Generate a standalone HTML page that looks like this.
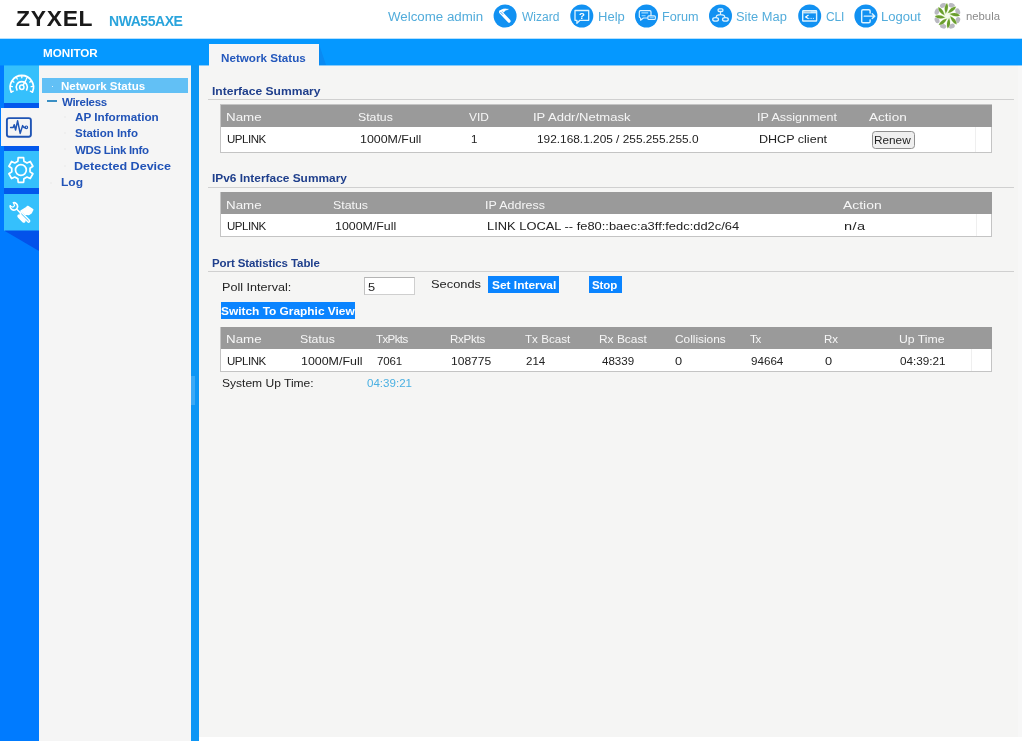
<!DOCTYPE html>
<html lang="en">
<head>
<meta charset="utf-8">
<title>ZYXEL NWA55AXE - Network Status</title>
<style>
html,body{margin:0;padding:0;}
body{width:1024px;height:741px;overflow:hidden;background:#fff;font-family:"Liberation Sans",sans-serif;}
#page{position:relative;width:1024px;height:741px;overflow:hidden;background:#fff;}
.t{position:absolute;white-space:pre;line-height:1;transform-origin:0 0;will-change:transform;font-family:"Liberation Sans",sans-serif;}
.b{position:absolute;}
svg{position:absolute;overflow:visible;}
#bar{left:0;top:39px;width:1022px;height:26px;background:#0598ff;}
#left{left:0;top:65px;width:39px;height:676px;background:#007bff;}
#tilebg{left:4px;top:65px;width:35px;height:166px;background:#0358ec;}
.tile{left:4px;width:35px;background:#35c0fc;}
#menu{left:39px;top:65px;width:152px;height:676px;background:#f5f5f5;}
#sel{left:42px;top:78px;width:146px;height:14.5px;background:#62c0f5;}
#split{left:191px;top:65px;width:8px;height:676px;background:#0d96f5;}
#main{left:199px;top:65px;width:823px;height:672px;background:#f5f5f4;}
#tab{left:209px;top:44px;width:110px;height:22px;background:#f5f5f5;}
.hr{left:208px;width:806px;height:1px;background:#d0d0d0;}
.tbl{left:220px;width:772px;border:1px solid #c4c4c4;box-sizing:border-box;background:#fff;}
.th{left:221px;width:771px;background:#9a9a9a;}
.btn{background:#0a84ff;}
</style>
</head>
<body>
<div id="page">

<header id="hdr">
<span class="t" id="t0" style="left:15.69px;top:7.84px;font-size:22px;color:#1a1a1a;font-weight:700;letter-spacing:0.683px;transform:scaleX(1.0400);">ZYXEL</span>
<span class="t" id="t1" style="left:109.39px;top:13.91px;font-size:14px;color:#2aa4dc;font-weight:700;letter-spacing:-0.449px;">NWA55AXE</span>
<span class="t" id="t2" style="left:387.79px;top:11.34px;font-size:12px;color:#52acdb;transform:scaleX(1.1094);">Welcome admin</span>
<span class="t" id="t3" style="left:522.29px;top:11.34px;font-size:12px;color:#52acdb;transform:scaleX(1.0024);">Wizard</span>
<span class="t" id="t4" style="left:597.53px;top:11.34px;font-size:12px;color:#52acdb;transform:scaleX(1.0851);">Help</span>
<span class="t" id="t5" style="left:662.31px;top:11.34px;font-size:12px;color:#52acdb;transform:scaleX(1.0538);">Forum</span>
<span class="t" id="t6" style="left:735.78px;top:11.34px;font-size:12px;color:#52acdb;transform:scaleX(1.0725);">Site Map</span>
<span class="t" id="t7" style="left:825.69px;top:11.34px;font-size:12px;color:#52acdb;letter-spacing:-0.172px;">CLI</span>
<span class="t" id="t8" style="left:881.25px;top:11.34px;font-size:12px;color:#52acdb;transform:scaleX(1.0892);">Logout</span>
<span class="t" id="t9" style="left:965.82px;top:10.61px;font-size:11px;color:#8a8a8a;transform:scaleX(1.0277);">nebula</span>
<svg class="b" style="left:0;top:0" width="1024" height="38" viewBox="0 0 1024 38" fill="none" stroke-linecap="round" stroke-linejoin="round">
<circle cx="505.1" cy="16" r="11.5" fill="#1191f2"/>
<circle cx="581.8" cy="16" r="11.5" fill="#1191f2"/>
<circle cx="646.5" cy="16" r="11.5" fill="#1191f2"/>
<circle cx="720.5" cy="16" r="11.5" fill="#1191f2"/>
<circle cx="809.7" cy="16" r="11.5" fill="#1191f2"/>
<circle cx="865.9" cy="16" r="11.5" fill="#1191f2"/>
<path d="M500.6 12.2 L509.1 21.1" stroke="#ffffff" stroke-width="3.2"/>
<path d="M500.7 12.3 L502.7 14.4" stroke="#1191f2" stroke-width="0.8"/>
<path d="M499.4 11.0 Q503.6 7.6 508.4 9.3 Q505.2 9.9 503.6 12.2 L502.2 10.9 Z" fill="#ffffff" stroke="#ffffff" stroke-width="0.5"/>
<path d="M575.0 10.5 H588.7 V20.3 H579.9 L576.9 23.2 V20.3 H575.0 Z" stroke="#dff4ff" stroke-width="1.3"/>
<text x="581.9" y="18.9" font-family="Liberation Sans, sans-serif" font-size="9.6" font-weight="700" fill="#ffffff" stroke="none" text-anchor="middle">?</text>
<path d="M640.6 10.7 H649.8 Q651.0 10.7 651.0 11.9 V16.8 Q651.0 18.0 649.8 18.0 H643.4 L640.6 20.2 V18.0 H640.5 Q639.3 18.0 639.3 16.8 V11.9 Q639.3 10.7 640.5 10.7 Z" stroke="#dff4ff" stroke-width="1.2"/>
<path d="M641.4 12.9 H648.2 M641.6 15.7 H645.6" stroke="#9fdcff" stroke-width="1.1" stroke-linecap="butt"/>
<rect x="647.9" y="15.9" width="7.4" height="3.6" rx="0.9" fill="#1191f2" stroke="#dff4ff" stroke-width="1.2"/>
<path d="M649.6 17.8 H653.8" stroke="#9fdcff" stroke-width="1" stroke-linecap="butt"/>
<rect x="718.1" y="8.8" width="4.8" height="2.7" rx="1.0" stroke="#dff4ff" stroke-width="1.3"/>
<path d="M720.5 12.2 V14.4 M716.2 17.0 Q716.4 14.7 720.5 14.7 Q724.6 14.7 724.8 17.0" stroke="#dff4ff" stroke-width="1.2"/>
<ellipse cx="715.6" cy="19.4" rx="2.9" ry="1.7" stroke="#dff4ff" stroke-width="1.3"/>
<ellipse cx="725.4" cy="19.4" rx="2.9" ry="1.7" stroke="#dff4ff" stroke-width="1.3"/>
<rect x="802.7" y="10.8" width="13.9" height="10.2" rx="0.6" stroke="#dff4ff" stroke-width="1.4"/>
<rect x="803.2" y="11.3" width="12.9" height="2.1" fill="#cfeeff" stroke="none"/>
<path d="M804.4 11.9 H810.6" stroke="#9fb6c6" stroke-width="0.9" stroke-linecap="butt"/>
<path d="M808.2 15.3 L805.6 16.9 L808.2 18.5" stroke="#ffffff" stroke-width="1.2"/>
<path d="M809.6 18.4 H814.0" stroke="#dff4ff" stroke-width="1.0" stroke-dasharray="0.9 0.8" stroke-linecap="butt"/>
<path d="M870.1 13.0 V11.0 Q870.1 9.7 868.8 9.7 H863.0 Q861.7 9.7 861.7 11.0 V21.5 Q861.7 22.8 863.0 22.8 H868.8 Q870.1 22.8 870.1 21.5 V20.0" stroke="#dff4ff" stroke-width="1.45"/>
<path d="M864.2 16.2 H874.4 M872.2 13.8 L874.8 16.2 L872.2 18.6" stroke="#dff4ff" stroke-width="1.3"/>
<ellipse cx="951.69" cy="5.45" rx="3.2" ry="2.3" transform="rotate(22.5 951.69 5.45)" fill="#b9b9c0"/>
<ellipse cx="957.75" cy="11.51" rx="3.2" ry="2.3" transform="rotate(67.5 957.75 11.51)" fill="#b9b9c0"/>
<ellipse cx="957.75" cy="20.09" rx="3.2" ry="2.3" transform="rotate(112.5 957.75 20.09)" fill="#b9b9c0"/>
<ellipse cx="951.69" cy="26.15" rx="3.2" ry="2.3" transform="rotate(157.5 951.69 26.15)" fill="#b9b9c0"/>
<ellipse cx="943.11" cy="26.15" rx="3.2" ry="2.3" transform="rotate(202.5 943.11 26.15)" fill="#b9b9c0"/>
<ellipse cx="937.05" cy="20.09" rx="3.2" ry="2.3" transform="rotate(247.5 937.05 20.09)" fill="#b9b9c0"/>
<ellipse cx="937.05" cy="11.51" rx="3.2" ry="2.3" transform="rotate(292.5 937.05 11.51)" fill="#b9b9c0"/>
<ellipse cx="943.11" cy="5.45" rx="3.2" ry="2.3" transform="rotate(337.5 943.11 5.45)" fill="#b9b9c0"/>
<circle cx="947.4" cy="15.8" r="4.5" fill="#f4faec"/>
<path d="M-1.7 -2.4 Q-4.2 -8.6 -0.4 -12.5 Q2.0 -7.8 -1.7 -2.4 Z" transform="translate(947.4 15.8) rotate(0)" fill="#6a9e2e" stroke="#d9eebf" stroke-width="0.8" paint-order="stroke"/>
<path d="M-1.7 -2.4 Q-4.2 -8.6 -0.4 -12.5 Q2.0 -7.8 -1.7 -2.4 Z" transform="translate(947.4 15.8) rotate(45)" fill="#6a9e2e" stroke="#d9eebf" stroke-width="0.8" paint-order="stroke"/>
<path d="M-1.7 -2.4 Q-4.2 -8.6 -0.4 -12.5 Q2.0 -7.8 -1.7 -2.4 Z" transform="translate(947.4 15.8) rotate(90)" fill="#6a9e2e" stroke="#d9eebf" stroke-width="0.8" paint-order="stroke"/>
<path d="M-1.7 -2.4 Q-4.2 -8.6 -0.4 -12.5 Q2.0 -7.8 -1.7 -2.4 Z" transform="translate(947.4 15.8) rotate(135)" fill="#6a9e2e" stroke="#d9eebf" stroke-width="0.8" paint-order="stroke"/>
<path d="M-1.7 -2.4 Q-4.2 -8.6 -0.4 -12.5 Q2.0 -7.8 -1.7 -2.4 Z" transform="translate(947.4 15.8) rotate(180)" fill="#6a9e2e" stroke="#d9eebf" stroke-width="0.8" paint-order="stroke"/>
<path d="M-1.7 -2.4 Q-4.2 -8.6 -0.4 -12.5 Q2.0 -7.8 -1.7 -2.4 Z" transform="translate(947.4 15.8) rotate(225)" fill="#6a9e2e" stroke="#d9eebf" stroke-width="0.8" paint-order="stroke"/>
<path d="M-1.7 -2.4 Q-4.2 -8.6 -0.4 -12.5 Q2.0 -7.8 -1.7 -2.4 Z" transform="translate(947.4 15.8) rotate(270)" fill="#6a9e2e" stroke="#d9eebf" stroke-width="0.8" paint-order="stroke"/>
<path d="M-1.7 -2.4 Q-4.2 -8.6 -0.4 -12.5 Q2.0 -7.8 -1.7 -2.4 Z" transform="translate(947.4 15.8) rotate(315)" fill="#6a9e2e" stroke="#d9eebf" stroke-width="0.8" paint-order="stroke"/>
</svg>
</header>

<div id="bar" class="b"></div>
<div class="b" style="left:0;top:38px;width:1022px;height:1px;background:#0598ff;opacity:.3;"></div>
<div id="barlabel">
<span class="t" id="t10" style="left:43.34px;top:47.71px;font-size:11.5px;color:#ffffff;font-weight:700;transform:scaleX(1.0128);">MONITOR</span>
</div>

<nav id="side">
<div id="left" class="b"></div>
<div id="tilebg" class="b"></div>
<div class="b tile" style="top:65px;height:38px;"></div>
<div class="b tile" style="left:1px;width:38px;top:108px;height:37.5px;background:#f5f5f5;"></div>
<div class="b tile" style="top:151px;height:37px;"></div>
<div class="b tile" style="top:194px;height:36.5px;"></div>
<svg class="b" style="left:0;top:226px" width="40" height="30" viewBox="0 226 40 30"><polygon points="4,230.6 39,230.6 39,251" fill="#0352ea"/></svg>
<svg class="b" style="left:0;top:65px" width="40" height="170" viewBox="0 65 40 170" fill="none" stroke-linecap="round" stroke-linejoin="round">
<path d="M11.20 92.14 A11.7 11.7 0 1 1 32.40 92.14" stroke="#ffffff" stroke-width="1.8"/>
<path d="M11.74 91.89 L13.28 91.17" stroke="#ffffff" stroke-width="1.3"/>
<path d="M10.72 86.47 L12.42 86.59" stroke="#ffffff" stroke-width="1.3"/>
<path d="M12.44 81.24 L13.87 82.15" stroke="#ffffff" stroke-width="1.3"/>
<path d="M16.46 77.47 L17.28 78.96" stroke="#ffffff" stroke-width="1.3"/>
<path d="M21.80 76.10 L21.80 77.80" stroke="#ffffff" stroke-width="1.3"/>
<path d="M27.14 77.47 L26.32 78.96" stroke="#ffffff" stroke-width="1.3"/>
<path d="M31.16 81.24 L29.73 82.15" stroke="#ffffff" stroke-width="1.3"/>
<path d="M32.88 86.47 L31.18 86.59" stroke="#ffffff" stroke-width="1.3"/>
<path d="M31.86 91.89 L30.32 91.17" stroke="#ffffff" stroke-width="1.3"/>
<path d="M16.95 90.00 A5.6 5.6 0 1 1 26.65 90.00" stroke="#ffffff" stroke-width="1.6"/>
<circle cx="21.8" cy="87.2" r="2.2" stroke="#ffffff" stroke-width="1.5"/>
<path d="M23.0 85.4 L26.0 80.0" stroke="#ffffff" stroke-width="1.5"/>
<rect x="6.9" y="118.1" width="24" height="18.6" rx="2.2" stroke="#1f54b4" stroke-width="1.9"/>
<path d="M10.6 127.4 H13.2 L14.2 124.8 L15.6 130 L17.6 120.8 L20.2 133.4 L22.6 125.6 L23.8 127.4 H25.2" stroke="#1f54b4" stroke-width="1.5"/>
<circle cx="26.3" cy="127.3" r="1.3" stroke="#1f54b4" stroke-width="1.2"/>
<polygon points="17.87,161.21 18.17,157.70 23.63,157.70 23.93,161.21 27.00,162.98 30.19,161.49 32.92,166.21 30.03,168.23 30.03,171.77 32.92,173.79 30.19,178.51 27.00,177.02 23.93,178.79 23.63,182.30 18.17,182.30 17.87,178.79 14.80,177.02 11.61,178.51 8.88,173.79 11.77,171.77 11.77,168.23 8.88,166.21 11.61,161.49 14.80,162.98" stroke="#ffffff" stroke-width="1.7" stroke-linejoin="round"/>
<circle cx="20.9" cy="170.0" r="5.4" stroke="#ffffff" stroke-width="1.7"/>
<path d="M13.45 202.73 A3.7 3.7 0 1 1 10.23 205.95" stroke="#ffffff" stroke-width="1.7"/>
<path d="M13.45 202.73 L14.6 205.6 L13.0 207.2 L10.23 205.95" stroke="#ffffff" stroke-width="1.2"/>
<path d="M16.8 209.2 L21.0 213.4" stroke="#ffffff" stroke-width="1.5"/>
<path d="M21.4 213.8 L28.6 221.0" stroke="#ffffff" stroke-width="3.6"/>
<path d="M21.6 214.0 L28.4 220.8" stroke="#35c0fc" stroke-width="1.0"/>
<path d="M20.8 211.2 L25.6 208.2 L27.8 206.4 L32.8 209.6 L31.2 213.0 L28.6 214.6 L25.6 214.4 L22.6 212.0 Z" fill="#ffffff" stroke="#ffffff" stroke-width="1.4"/>
<path d="M19.2 216.2 L23.8 220.8" stroke="#ffffff" stroke-width="3.8"/>
</svg>
</nav>

<nav id="menuwrap">
<div id="menu" class="b"></div>
<div id="sel" class="b"></div>
<div class="b" style="left:47px;top:100.3px;width:10px;height:1.6px;background:#3a8fc4;"></div>
<div class="b" style="left:51.8px;top:85.8px;width:1.4px;height:1.4px;background:#fff;opacity:.75;"></div>
<div class="b" style="left:64px;top:116px;width:2px;height:2px;background:#efefef;"></div>
<div class="b" style="left:64px;top:132px;width:2px;height:2px;background:#efefef;"></div>
<div class="b" style="left:64px;top:148px;width:2px;height:2px;background:#efefef;"></div>
<div class="b" style="left:64px;top:164.5px;width:2px;height:2px;background:#efefef;"></div>
<div class="b" style="left:49.5px;top:182px;width:2px;height:2px;background:#efefef;"></div>
<span class="t" id="t11" style="left:61.34px;top:81.21px;font-size:11.5px;color:#ffffff;font-weight:700;transform:scaleX(1.0049);">Network Status</span>
<span class="t" id="t12" style="left:61.64px;top:96.65px;font-size:11.5px;color:#2153b7;font-weight:700;letter-spacing:-0.293px;">Wireless</span>
<span class="t" id="t13" style="left:74.91px;top:111.75px;font-size:11.5px;color:#2153b7;font-weight:700;transform:scaleX(1.0185);">AP Information</span>
<span class="t" id="t14" style="left:74.50px;top:127.79px;font-size:11.5px;color:#2153b7;font-weight:700;letter-spacing:-0.028px;">Station Info</span>
<span class="t" id="t15" style="left:75.37px;top:144.65px;font-size:11.5px;color:#2153b7;font-weight:700;letter-spacing:-0.325px;">WDS Link Info</span>
<span class="t" id="t16" style="left:74.37px;top:160.89px;font-size:11.5px;color:#2153b7;font-weight:700;transform:scaleX(1.0928);">Detected Device</span>
<span class="t" id="t17" style="left:61.31px;top:177.47px;font-size:11.5px;color:#2153b7;font-weight:700;transform:scaleX(1.0463);">Log</span>
</nav>

<div id="split" class="b"></div>
<div class="b" style="left:191px;top:376px;width:4px;height:29px;background:#3aa9f7;"></div>

<main id="mainwrap">
<div id="main" class="b"></div>
<div class="b" style="left:1018px;top:65px;width:4px;height:672px;background:#f7f7f7;"></div>
<div class="b" style="left:0;top:65px;width:1022px;height:1px;background:#0598ff;opacity:.45;"></div>
<div id="tab" class="b"></div>
<svg class="b" style="left:319px;top:44px" width="8" height="21" viewBox="0 0 8 21"><polygon points="0,0 0,21 7,21" fill="#0a8af2"/></svg>
<span class="t" id="t18" style="left:221.48px;top:52.71px;font-size:11.5px;color:#2458bc;font-weight:700;transform:scaleX(1.0123);">Network Status</span>

<div class="b hr" style="top:99px;"></div>
<div class="b tbl" style="top:104px;height:48.5px;"></div>
<div class="b th" style="top:104.5px;height:22px;"></div>
<div class="b" style="left:974.5px;top:127px;width:1px;height:24.5px;background:#efefef;"></div>
<div class="b" style="left:872px;top:130.5px;width:42.5px;height:18px;box-sizing:border-box;border:1px solid #8f8f8f;border-radius:3.5px;background:#efefef;"></div>

<div class="b hr" style="top:186.5px;"></div>
<div class="b tbl" style="top:192px;height:45px;"></div>
<div class="b th" style="top:192.4px;height:21.5px;"></div>
<div class="b" style="left:975.5px;top:214px;width:1px;height:22px;background:#efefef;"></div>

<div class="b hr" style="top:271px;"></div>
<div class="b" style="left:364px;top:276.5px;width:51px;height:18px;box-sizing:border-box;border:1px solid #cfcfcf;border-top-color:#b4b4b4;border-left-color:#c0c0c0;background:#fff;"></div>
<div class="b btn" style="left:487.7px;top:276.3px;width:71.3px;height:17.2px;"></div>
<div class="b btn" style="left:588.6px;top:276.3px;width:33.3px;height:17.2px;"></div>
<div class="b btn" style="left:221px;top:302.4px;width:134px;height:17px;"></div>

<div class="b tbl" style="top:327px;height:44.5px;"></div>
<div class="b th" style="top:327.4px;height:21.4px;"></div>
<div class="b" style="left:971px;top:349px;width:1px;height:22px;background:#efefef;"></div>
<span class="t" id="t19" style="left:212.44px;top:86.19px;font-size:11.5px;color:#1f3f8c;font-weight:700;transform:scaleX(1.0475);">Interface Summary</span>
<span class="t" id="t20" style="left:212.05px;top:173.13px;font-size:11.5px;color:#1f3f8c;font-weight:700;transform:scaleX(1.0346);">IPv6 Interface Summary</span>
<span class="t" id="t21" style="left:212.09px;top:257.87px;font-size:11.5px;color:#1f3f8c;font-weight:700;letter-spacing:-0.094px;">Port Statistics Table</span>
<span class="t" id="t22" style="left:225.79px;top:111.71px;font-size:11.5px;color:#f6f6f6;transform:scaleX(1.1591);">Name</span>
<span class="t" id="t23" style="left:358.22px;top:111.71px;font-size:11.5px;color:#f6f6f6;transform:scaleX(1.0689);">Status</span>
<span class="t" id="t24" style="left:469.33px;top:111.71px;font-size:11.5px;color:#f6f6f6;transform:scaleX(1.0352);">VID</span>
<span class="t" id="t25" style="left:533.44px;top:111.71px;font-size:11.5px;color:#f6f6f6;transform:scaleX(1.1316);">IP Addr/Netmask</span>
<span class="t" id="t26" style="left:757.21px;top:111.71px;font-size:11.5px;color:#f6f6f6;transform:scaleX(1.0905);">IP Assignment</span>
<span class="t" id="t27" style="left:869.44px;top:111.71px;font-size:11.5px;color:#f6f6f6;transform:scaleX(1.1804);">Action</span>
<span class="t" id="t28" style="left:226.53px;top:133.87px;font-size:11.5px;color:#222222;letter-spacing:-0.456px;">UPLINK</span>
<span class="t" id="t29" style="left:359.59px;top:133.87px;font-size:11.5px;color:#222222;transform:scaleX(1.0777);">1000M/Full</span>
<span class="t" id="t30" style="left:470.73px;top:133.87px;font-size:11.5px;color:#222222;">1</span>
<span class="t" id="t31" style="left:536.53px;top:133.87px;font-size:11.5px;color:#222222;transform:scaleX(1.0309);">192.168.1.205 / 255.255.255.0</span>
<span class="t" id="t32" style="left:758.62px;top:133.87px;font-size:11.5px;color:#222222;transform:scaleX(1.0910);">DHCP client</span>
<span class="t" id="t33" style="left:874.30px;top:135.37px;font-size:11px;color:#222;transform:scaleX(1.0716);">Renew</span>
<span class="t" id="t34" style="left:225.79px;top:199.59px;font-size:11.5px;color:#f6f6f6;transform:scaleX(1.1591);">Name</span>
<span class="t" id="t35" style="left:332.96px;top:199.59px;font-size:11.5px;color:#f6f6f6;transform:scaleX(1.0738);">Status</span>
<span class="t" id="t36" style="left:485.28px;top:199.59px;font-size:11.5px;color:#f6f6f6;transform:scaleX(1.0825);">IP Address</span>
<span class="t" id="t37" style="left:843.30px;top:199.59px;font-size:11.5px;color:#f6f6f6;transform:scaleX(1.2097);">Action</span>
<span class="t" id="t38" style="left:226.53px;top:221.05px;font-size:11.5px;color:#222222;letter-spacing:-0.456px;">UPLINK</span>
<span class="t" id="t39" style="left:335.13px;top:221.05px;font-size:11.5px;color:#222222;transform:scaleX(1.0768);">1000M/Full</span>
<span class="t" id="t40" style="left:487.46px;top:221.05px;font-size:11.5px;color:#222222;transform:scaleX(1.1201);">LINK LOCAL -- fe80::baec:a3ff:fedc:dd2c/64</span>
<span class="t" id="t41" style="left:843.55px;top:221.05px;font-size:11.5px;color:#222222;letter-spacing:0.308px;transform:scaleX(1.2669);">n/a</span>
<span class="t" id="t42" style="left:222.27px;top:281.87px;font-size:11.5px;color:#222222;transform:scaleX(1.0947);">Poll Interval:</span>
<span class="t" id="t43" style="left:367.70px;top:281.71px;font-size:11.5px;color:#222222;transform:scaleX(1.1132);">5</span>
<span class="t" id="t44" style="left:430.56px;top:279.29px;font-size:11.5px;color:#222222;transform:scaleX(1.1178);">Seconds</span>
<span class="t" id="t45" style="left:491.69px;top:279.61px;font-size:11.5px;color:#fff;font-weight:700;transform:scaleX(1.0367);">Set Interval</span>
<span class="t" id="t46" style="left:592.31px;top:279.61px;font-size:11.5px;color:#fff;font-weight:700;letter-spacing:-0.073px;">Stop</span>
<span class="t" id="t47" style="left:221.08px;top:306.13px;font-size:11.5px;color:#fff;font-weight:700;transform:scaleX(1.0341);">Switch To Graphic View</span>
<span class="t" id="t48" style="left:225.79px;top:333.63px;font-size:11.5px;color:#f6f6f6;transform:scaleX(1.1591);">Name</span>
<span class="t" id="t49" style="left:300.22px;top:333.63px;font-size:11.5px;color:#f6f6f6;transform:scaleX(1.0689);">Status</span>
<span class="t" id="t50" style="left:376.08px;top:333.63px;font-size:11.5px;color:#f6f6f6;letter-spacing:-0.591px;">TxPkts</span>
<span class="t" id="t51" style="left:449.69px;top:333.63px;font-size:11.5px;color:#f6f6f6;letter-spacing:-0.244px;">RxPkts</span>
<span class="t" id="t52" style="left:525.25px;top:333.63px;font-size:11.5px;color:#f6f6f6;transform:scaleX(1.0114);">Tx Bcast</span>
<span class="t" id="t53" style="left:599.28px;top:333.63px;font-size:11.5px;color:#f6f6f6;transform:scaleX(1.0381);">Rx Bcast</span>
<span class="t" id="t54" style="left:675.39px;top:333.63px;font-size:11.5px;color:#f6f6f6;transform:scaleX(1.0305);">Collisions</span>
<span class="t" id="t55" style="left:749.62px;top:333.63px;font-size:11.5px;color:#f6f6f6;letter-spacing:-1.559px;">Tx</span>
<span class="t" id="t56" style="left:823.82px;top:333.63px;font-size:11.5px;color:#f6f6f6;transform:scaleX(1.0028);">Rx</span>
<span class="t" id="t57" style="left:898.57px;top:333.63px;font-size:11.5px;color:#f6f6f6;transform:scaleX(1.0652);">Up Time</span>
<span class="t" id="t58" style="left:226.53px;top:356.05px;font-size:11.5px;color:#222222;letter-spacing:-0.456px;">UPLINK</span>
<span class="t" id="t59" style="left:301.13px;top:356.05px;font-size:11.5px;color:#222222;transform:scaleX(1.0795);">1000M/Full</span>
<span class="t" id="t60" style="left:376.53px;top:356.05px;font-size:11.5px;color:#222222;letter-spacing:-0.114px;">7061</span>
<span class="t" id="t61" style="left:451.25px;top:356.05px;font-size:11.5px;color:#222222;transform:scaleX(1.0482);">108775</span>
<span class="t" id="t62" style="left:526.22px;top:356.05px;font-size:11.5px;color:#222222;letter-spacing:0.014px;">214</span>
<span class="t" id="t63" style="left:601.65px;top:356.05px;font-size:11.5px;color:#222222;transform:scaleX(1.0059);">48339</span>
<span class="t" id="t64" style="left:675.29px;top:356.05px;font-size:11.5px;color:#222222;transform:scaleX(1.1118);">0</span>
<span class="t" id="t65" style="left:750.53px;top:356.05px;font-size:11.5px;color:#222222;transform:scaleX(1.0114);">94664</span>
<span class="t" id="t66" style="left:825.29px;top:356.05px;font-size:11.5px;color:#222222;transform:scaleX(1.1118);">0</span>
<span class="t" id="t67" style="left:900.14px;top:356.05px;font-size:11.5px;color:#222222;transform:scaleX(1.0162);">04:39:21</span>
<span class="t" id="t68" style="left:222.37px;top:377.71px;font-size:11.5px;color:#222222;transform:scaleX(1.0464);">System Up Time:</span>
<span class="t" id="t69" style="left:366.56px;top:377.71px;font-size:11.5px;color:#4ab0e2;transform:scaleX(1.0063);">04:39:21</span>
</main>

</div>
</body>
</html>
